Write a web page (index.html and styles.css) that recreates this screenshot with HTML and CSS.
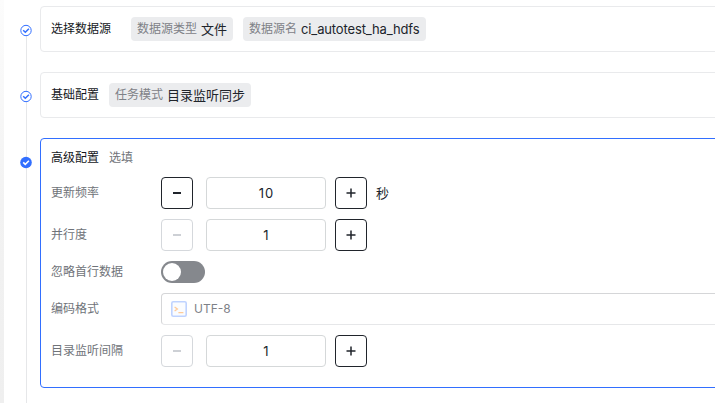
FILE: index.html
```html
<!DOCTYPE html>
<html lang="zh-CN">
<head>
<meta charset="utf-8">
<title>任务配置</title>
<link rel="stylesheet" href="styles.css">
</head>
<body>
<svg class="defs" width="0" height="0">
  <symbol id="plus" viewBox="0 0 10 10"><path d="M5 .5v9M.5 5h9" stroke="currentColor" stroke-width="1.5"/></symbol>
  <symbol id="minus" viewBox="0 0 10 10"><path d="M1 5h8" stroke="currentColor" stroke-width="2"/></symbol>
</svg>
<div class="page">
  <div class="edge"></div>
  <main class="steps">
    <section class="step">
      <div class="rail first">
        <svg class="dot" viewBox="0 0 12 12"><circle cx="6" cy="6" r="5.2" fill="#fff" stroke="#326fff" stroke-width="1"/><path d="M3.2 5.8l2.1 2L8.9 4.2" fill="none" stroke="#326fff" stroke-width="1.5"/></svg>
      </div>
      <div class="card bar wide">
        <h2>选择数据源</h2>
        <div class="tags">
          <span class="tag"><span class="key">数据源类型</span><span class="value">文件</span></span>
          <span class="tag"><span class="key">数据源名</span><span class="value latin">ci_autotest_ha_hdfs</span></span>
        </div>
      </div>
    </section>
    <section class="step">
      <div class="rail">
        <svg class="dot" viewBox="0 0 12 12"><circle cx="6" cy="6" r="5.2" fill="#fff" stroke="#326fff" stroke-width="1"/><path d="M3.2 5.8l2.1 2L8.9 4.2" fill="none" stroke="#326fff" stroke-width="1.5"/></svg>
      </div>
      <div class="card bar">
        <h2>基础配置</h2>
        <div class="tags">
          <span class="tag"><span class="key">任务模式</span><span class="value">目录监听同步</span></span>
        </div>
      </div>
    </section>
    <section class="step">
      <div class="rail">
        <svg class="dot" viewBox="0 0 12 12"><circle cx="6" cy="6" r="5.8" fill="#326fff"/><path d="M3.2 5.8l2.1 2L8.9 4.3" fill="none" stroke="#fff" stroke-width="1.6"/></svg>
      </div>
      <div class="card active">
        <header><h2>高级配置</h2><span class="optional">选填</span></header>
        <div class="row">
          <span class="label">更新频率</span>
          <span class="btn"><svg><use href="#minus"/></svg></span>
          <span class="input">10</span>
          <span class="btn"><svg><use href="#plus"/></svg></span>
          <span class="unit">秒</span>
        </div>
        <div class="row">
          <span class="label">并行度</span>
          <span class="btn disabled"><svg><use href="#minus"/></svg></span>
          <span class="input">1</span>
          <span class="btn"><svg><use href="#plus"/></svg></span>
        </div>
        <div class="row short">
          <span class="label">忽略首行数据</span>
          <span class="switch"><span class="knob"></span></span>
        </div>
        <div class="row">
          <span class="label">编码格式</span>
          <div class="select">
            <svg class="code" viewBox="0 0 16 16"><rect x=".8" y=".8" width="14.4" height="14.4" rx="1.4" fill="#fafcff" stroke="#bfd3ff" stroke-width="1.6"/><path d="M3.6 6l2.8 2-2.8 2M7.4 11.7h5" fill="none" stroke="#ffcb99" stroke-width="1.3"/></svg>
            <span>UTF-8</span>
          </div>
        </div>
        <div class="row">
          <span class="label">目录监听间隔</span>
          <span class="btn disabled"><svg><use href="#minus"/></svg></span>
          <span class="input">1</span>
          <span class="btn"><svg><use href="#plus"/></svg></span>
        </div>
      </div>
    </section>
  </main>
</div>
</body>
</html>
```
FILE: styles.css
```css
* { box-sizing: border-box; }
body {
  margin: 0;
  background: #fff;
  color: #20242b;
  font: 12px/18px Inter, "Noto Sans CJK SC", sans-serif;
  overflow: hidden;
}
.defs { display: block; }
.page { display: flex; height: 403px; overflow: hidden; }
.edge { flex: none; width: 4px; background: linear-gradient(#fcfcfc, #f2f2f2 50%, #efefef); }
.steps { flex: 1; min-width: 0; padding-top: 6px; }
.step { display: flex; }
.rail {
  flex: none;
  width: 36px;
  padding: 18px 0 0 16px;
  background: linear-gradient(#e6e7e9, #e6e7e9) 22px 0 / 1px 100% no-repeat;
}
.rail.first { background-position: 22px 30px; }
.step:last-child .rail { height: 265px; }
.dot { display: block; width: 12px; height: 13px; }
.card {
  flex: none;
  width: 685px;
  margin-bottom: 20px;
  border: 1px solid #e9eaec;
  border-radius: 4px;
}
.bar { display: flex; align-items: center; gap: 10px; height: 46px; padding: 0 10px; }
.bar.wide { gap: 20px; }
h2 { margin: 0; font-size: 12px; line-height: 18px; font-weight: 400; color: #14171c; }
.bar h2 { padding-bottom: 1px; }
.tags { display: flex; gap: 10px; }
.tag {
  display: flex;
  align-items: center;
  gap: 4px;
  height: 24px;
  padding: 0 6px;
  border-radius: 4px;
  background: #ebecee;
}
.key { color: #7e8187; padding-bottom: 1px; }
.value { font-size: 13px; }
.latin { width: 119px; white-space: nowrap; letter-spacing: -.14px; }
.active { height: 250px; border-color: #326fff; padding: 10px 0 0 10px; }
header { display: flex; gap: 10px; height: 18px; margin-bottom: 10px; }
.optional, .label { color: #6f7379; }
.row { display: flex; align-items: center; height: 32px; margin-bottom: 10px; }
.row.short { height: 22px; }
.label { flex: none; width: 110px; padding-bottom: 1px; }
.btn {
  display: flex;
  align-items: center;
  justify-content: center;
  width: 32px;
  height: 32px;
  border: 1px solid #20242b;
  border-radius: 4px;
}
.btn svg { width: 10px; height: 10px; }
.btn.disabled { border-color: #d5d8dc; color: #cdd0d5; }
.input {
  width: 120px;
  height: 32px;
  margin: 0 9px 0 13px;
  border: 1px solid #d5d8d9;
  border-radius: 4px;
  font-size: 13px;
  line-height: 31px;
  text-align: center;
  letter-spacing: 1px;
  padding-left: 1px;
}
.unit { margin-left: 9px; font-size: 13px; }
.switch { width: 44px; height: 22px; padding: 2px; border-radius: 11px; background: #85888d; }
.knob { display: block; width: 18px; height: 18px; border-radius: 50%; background: #fff; }
.select {
  display: flex;
  align-items: center;
  gap: 7px;
  flex: 1;
  height: 32px;
  padding: 0 9px 0 9px;
  border: 1px solid #d5d6d8;
  border-bottom-color: #e6e7e9;
  border-radius: 4px;
  color: #7e8187;
}
.code { width: 16px; height: 16px; }
```
